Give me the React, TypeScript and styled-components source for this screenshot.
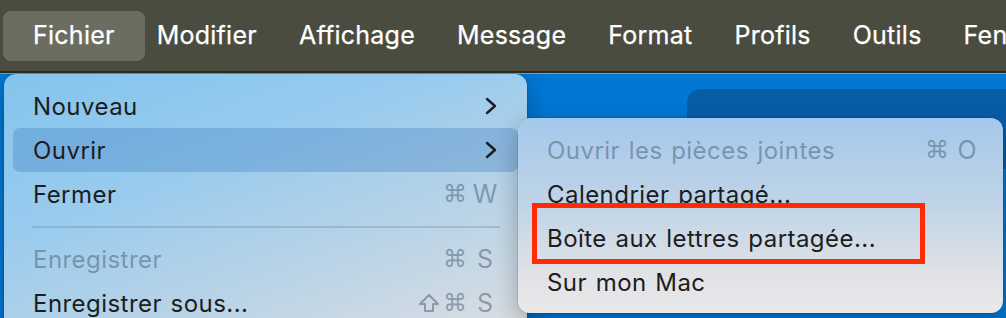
import React from "react";
import styled, { createGlobalStyle } from "styled-components";

const GlobalStyle = createGlobalStyle`
  html, body {
    margin: 0;
    padding: 0;
    background: #0277d3;
    overflow: hidden;
  }
  body {
    font-family: Inter, "Noto Sans", "DejaVu Sans", sans-serif;
  }
`;

const Screen = styled.div`
  width: 1006px;
  height: 318px;
  overflow: hidden;
  display: flex;
  flex-direction: column;
`;

const MenuBar = styled.div`
  height: 71px;
  flex-shrink: 0;
  display: flex;
  align-items: center;
  padding-left: 3px;
  background: #4b4c40;
  border-bottom: 2px solid #2c2b24;
  white-space: nowrap;
`;

const MenuTitle = styled.div<{ $active?: boolean }>`
  height: 50px;
  box-sizing: border-box;
  display: flex;
  align-items: center;
  padding: ${(p) => (p.$active ? "0 30px 2px 30px" : "0 21px 2px")};
  margin-right: ${(p) => (p.$active ? "-9px" : "0")};
  border-radius: 8px;
  background: ${(p) => (p.$active ? "#6b6d61" : "transparent")};
  color: #ffffff;
  font-size: 25px;
  font-weight: 400;
  letter-spacing: 0.25px;
  -webkit-text-stroke: 0.25px #ffffff;
`;

const Desktop = styled.div`
  position: relative;
  flex: 1;
  overflow: hidden;
`;

const AppWindow = styled.div`
  height: 100%;
  display: flex;
  flex-direction: column;
  background: #0277d3;
  border-top: 1px solid #5aa6e6;
`;

const TabPanel = styled.div`
  margin: 15px 0 0 687px;
  height: 80px;
  background: #085da7;
  border-top-left-radius: 14px;
`;

const Menu = styled.div<{ $left: number; $top: number; $width: number; $tone: "main" | "sub" }>`
  position: absolute;
  left: ${(p) => p.$left}px;
  top: ${(p) => p.$top}px;
  width: ${(p) => p.$width}px;
  box-sizing: border-box;
  padding: 10px 9px 9px;
  border-radius: 12px;
  background: ${(p) =>
    p.$tone === "main"
      ? "linear-gradient(160deg, #84c4ed 0%, #98cbee 35%, #bcd4e6 70%, #dcdfe2 100%)"
      : "linear-gradient(180deg, #a4c8ec 0%, #c0d4e7 45%, #e0e2e6 80%, #e9e9ea 100%)"};
  box-shadow: 0 0 0 0.5px rgba(0, 0, 0, 0.18), 0 8px 24px rgba(0, 0, 0, 0.28);
`;

const Row = styled.div<{ $selected?: boolean; $disabled?: boolean; $padRight: number }>`
  height: 44px;
  display: flex;
  align-items: center;
  padding: 0 ${(p) => p.$padRight}px 0 20px;
  border-radius: 7px;
  background: ${(p) => (p.$selected ? "rgba(60, 120, 190, 0.32)" : "transparent")};
  color: ${(p) => (p.$disabled ? "rgba(70, 90, 110, 0.5)" : "#1c1d20")};
  font-size: 24px;
  letter-spacing: 0.45px;
  word-spacing: 1.5px;
  white-space: nowrap;
`;

const Label = styled.span`
  flex: 1;
`;

const Shortcut = styled.span`
  display: flex;
  align-items: center;
  gap: 3px;
  color: rgba(70, 90, 110, 0.5);
  font-size: 25px;
  letter-spacing: 0;
`;

const Mods = styled.span`
  display: flex;
  align-items: center;
  gap: 3px;
  font-family: "DejaVu Sans", sans-serif;
  font-size: 24px;
`;

const ShiftIcon = styled.svg`
  width: 22px;
  height: 20px;
`;

const Key = styled.span`
  width: 30px;
  text-align: center;
`;

const Chevron = styled.svg`
  width: 14px;
  height: 18px;
  margin-right: 2px;
`;

const Separator = styled.div`
  height: 21px;
  display: flex;
  align-items: center;
  padding: 0 18px 0 19px;

  &::after {
    content: "";
    flex: 1;
    height: 2px;
    background: rgba(70, 110, 150, 0.25);
  }
`;

const Annotation = styled.div`
  position: absolute;
  left: 14px;
  top: 85px;
  width: 393px;
  height: 61px;
  box-sizing: border-box;
  border: 5px solid #ff2a06;
`;

const ChevronIcon = () => (
  <Chevron viewBox="0 0 14 18">
    <polyline points="3,2 11,9 3,16" fill="none" stroke="#1c1d20" strokeWidth="2.4" strokeLinecap="round" strokeLinejoin="round" />
  </Chevron>
);

const Shift = () => (
  <ShiftIcon viewBox="0 0 22 20">
    <path
      d="M11 2 L20 11 H15 V18 H7 V11 H2 Z"
      fill="none"
      stroke="rgba(70, 90, 110, 0.5)"
      strokeWidth="2"
      strokeLinejoin="round"
    />
  </ShiftIcon>
);

const titles = ["Fichier", "Modifier", "Affichage", "Message", "Format", "Profils", "Outils", "Fenêtre"];

export default function App() {
  return (
    <Screen>
      <GlobalStyle />
      <MenuBar>
        {titles.map((t, i) => (
          <MenuTitle key={t} $active={i === 0}>{t}</MenuTitle>
        ))}
      </MenuBar>
      <Desktop>
        <AppWindow>
          <TabPanel />
        </AppWindow>

        <Menu $left={4} $top={1} $width={523} $tone="main">
          <Row $padRight={18}>
            <Label>Nouveau</Label>
            <ChevronIcon />
          </Row>
          <Row $padRight={18} $selected>
            <Label>Ouvrir</Label>
            <ChevronIcon />
          </Row>
          <Row $padRight={18}>
            <Label>Fermer</Label>
            <Shortcut><Mods>⌘</Mods><Key>W</Key></Shortcut>
          </Row>
          <Separator />
          <Row $padRight={18} $disabled>
            <Label>Enregistrer</Label>
            <Shortcut><Mods>⌘</Mods><Key>S</Key></Shortcut>
          </Row>
          <Row $padRight={18}>
            <Label>Enregistrer sous...</Label>
            <Shortcut><Mods><Shift />⌘</Mods><Key>S</Key></Shortcut>
          </Row>
        </Menu>

        <Menu $left={518} $top={45} $width={485} $tone="sub">
          <Row $padRight={12} $disabled>
            <Label>Ouvrir les pièces jointes</Label>
            <Shortcut><Mods>⌘</Mods><Key>O</Key></Shortcut>
          </Row>
          <Row $padRight={12}>
            <Label>Calendrier partagé...</Label>
          </Row>
          <Row $padRight={12}>
            <Label>Boîte aux lettres partagée...</Label>
          </Row>
          <Row $padRight={12}>
            <Label>Sur mon Mac</Label>
          </Row>
          <Annotation />
        </Menu>
      </Desktop>
    </Screen>
  );
}
